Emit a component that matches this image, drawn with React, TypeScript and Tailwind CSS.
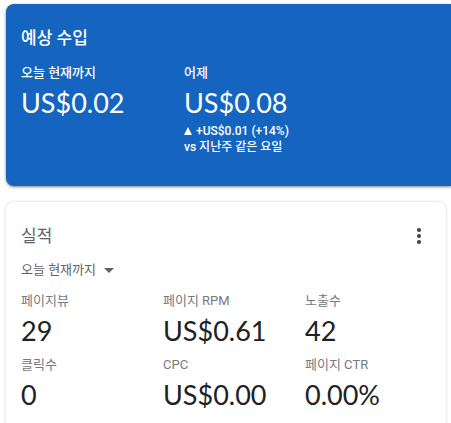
interface IMetric {
  label: string;
  value: string;
}

const metrics: IMetric[] = [
  { label: "페이지뷰", value: "29" },
  { label: "페이지 RPM", value: "US$0.61" },
  { label: "노출수", value: "42" },
  { label: "클릭수", value: "0" },
  { label: "CPC", value: "US$0.00" },
  { label: "페이지 CTR", value: "0.00%" },
];

const Earnings = () => {
  return (
    <section className="rounded-l-lg bg-[#1565c0] px-[15px] pt-5 pb-[31px] text-white shadow-[0_1px_3px_rgba(0,0,0,0.5)]">
      <h2 className="text-[17px] leading-7 font-medium">예상 수입</h2>
      <div className="mt-[11px] grid grid-cols-[163px_1fr]">
        <div>
          <h3 className="text-[13px] leading-5 font-medium">오늘 현재까지</h3>
          <p className="font-['Lato',sans-serif] text-[27px] leading-10">US$0.02</p>
        </div>
        <div>
          <h3 className="text-[13px] leading-5 font-medium">어제</h3>
          <p className="font-['Lato',sans-serif] text-[27px] leading-10">US$0.08</p>
          <p className="flex items-center gap-1 text-xs leading-4 font-medium">
            <svg className="size-2" viewBox="0 0 8 8" fill="currentColor" aria-hidden="true">
              <path d="M4 0l4 8H0z" />
            </svg>
            +US$0.01 (+14%)
          </p>
          <p className="text-xs leading-4 font-medium">vs 지난주 같은 요일</p>
        </div>
      </div>
    </section>
  );
};

const Performance = () => {
  return (
    <section className="mr-[5px] rounded-lg bg-white px-[15px] pt-5 pb-6 shadow-[0_0_3px_rgba(0,0,0,0.2)]">
      <div className="flex items-center justify-between">
        <h2 className="text-[17px] leading-7 text-[#5f6368]">실적</h2>
        <button type="button" aria-label="더보기" className="py-1 text-[#3c4043]">
          <svg className="h-4 w-6" viewBox="0 0 24 16" fill="currentColor">
            <circle cx="12" cy="2" r="2" />
            <circle cx="12" cy="8" r="2" />
            <circle cx="12" cy="14" r="2" />
          </svg>
        </button>
      </div>
      <button
        type="button"
        className="mt-[10px] flex items-center gap-2 text-[13px] leading-5 text-[#5f6368]"
      >
        오늘 현재까지
        <svg className="h-[5px] w-[10px]" viewBox="0 0 10 5" fill="currentColor" aria-hidden="true">
          <path d="M0 0h10L5 5z" />
        </svg>
      </button>
      <dl className="mt-[11px] grid grid-cols-[142px_142px_1fr] gap-y-1">
        {metrics.map((metric) => {
          return (
            <div key={metric.label}>
              <dt className="text-[13px] leading-5 text-[#757980]">{metric.label}</dt>
              <dd className="font-['Lato',sans-serif] text-[27px] leading-10 text-[#202124]">
                {metric.value}
              </dd>
            </div>
          );
        })}
      </dl>
    </section>
  );
};

const App = () => {
  return (
    <main className="flex min-h-screen flex-col gap-4 bg-white pt-1 pl-[6px] font-['Roboto','Noto_Sans_CJK_KR',sans-serif]">
      <Earnings />
      <Performance />
    </main>
  );
};

export default App;
